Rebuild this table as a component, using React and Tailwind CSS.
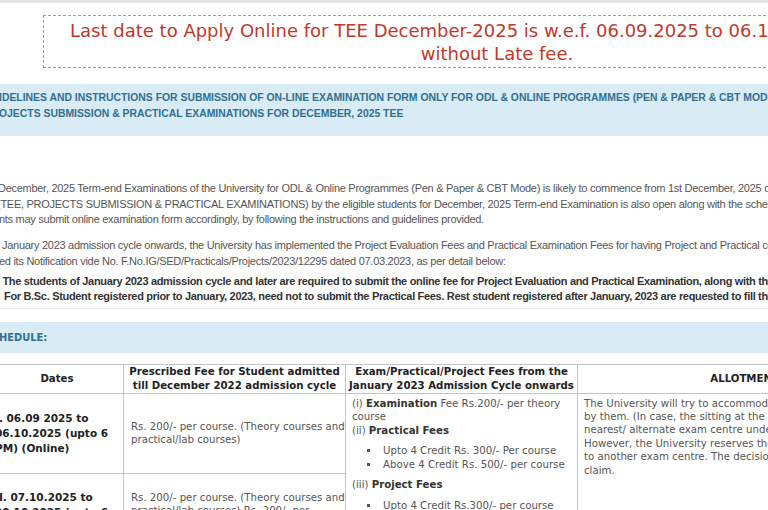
import React from "react";

const tbl = { fontFamily: '"DejaVu Sans", Verdana, sans-serif' };

export default function App() {
  return (
    <div className="w-[768px] h-[510px] overflow-hidden bg-white relative">
      <div className="h-[3px] bg-[#e4e4e4]" />
      {/* notice box */}
      <div
        className="ml-[43px] mt-[12px] w-[908px] h-[53px] border border-dashed border-[#9a9a9a] text-center text-[#c0392b] text-[18px] leading-[23px] pt-[3px] whitespace-nowrap"
        style={{ fontFamily: '"DejaVu Sans", Verdana, sans-serif' }}
      >
        <div>Last date to Apply Online for TEE December-2025 is w.e.f. 06.09.2025 to 06.10.2025 (6:00 PM)</div>
        <div>without Late fee.</div>
      </div>

      {/* heading band */}
      <div
        className="mt-[16px] h-[52px] bg-[#d9ebf5] text-[#31708f] font-bold text-[10.4px] leading-[16px] pt-[6px] whitespace-nowrap"
        style={{ fontFamily: '"Liberation Sans", Arial, sans-serif' }}
      >
        <div className="-ml-[1px]">IDELINES AND INSTRUCTIONS FOR SUBMISSION OF ON-LINE EXAMINATION FORM ONLY FOR ODL &amp; ONLINE PROGRAMMES (PEN &amp; PAPER &amp; CBT MODE)</div>
        <div className="-ml-[1px]">OJECTS SUBMISSION &amp; PRACTICAL EXAMINATIONS FOR DECEMBER, 2025 TEE</div>
      </div>

      {/* paragraphs */}
      <div
        className="mt-[45px] text-[#555] text-[11px] leading-[15.5px] tracking-[-0.28px] whitespace-nowrap"
        style={{ fontFamily: '"Liberation Sans", Arial, sans-serif' }}
      >
        <div>
          <div className="-ml-[2px]">December, 2025 Term-end Examinations of the University for ODL &amp; Online Programmes (Pen &amp; Paper &amp; CBT Mode) is likely to commence from 1st December, 2025 onwards.</div>
          <div className="-ml-[3px]">(TEE, PROJECTS SUBMISSION &amp; PRACTICAL EXAMINATIONS) by the eligible students for December, 2025 Term-end Examination is also open along with the schedule.</div>
          <div className="-ml-[1px]">nts may submit online examination form accordingly, by following the instructions and guidelines provided.</div>
        </div>
        <div className="mt-[10.5px]">
          <div className="ml-[2px]">January 2023 admission cycle onwards, the University has implemented the Project Evaluation Fees and Practical Examination Fees for having Project and Practical courses</div>
          <div className="-ml-[1px]">ed its Notification vide No. F.No.IG/SED/Practicals/Projects/2023/12295 dated 07.03.2023, as per detail below:</div>
        </div>
        <div className="mt-[4.5px] font-bold text-[#333] tracking-[-0.32px]">
          <div className="-ml-[3px]">. The students of January 2023 admission cycle and later are required to submit the online fee for Project Evaluation and Practical Examination, along with the</div>
          <div className="ml-[4px]">For B.Sc. Student registered prior to January, 2023, need not to submit the Practical Fees. Rest student registered after January, 2023 are requested to fill the</div>
        </div>
      </div>

      <div className="mt-[3px] h-[1px] bg-[#e6eef2]" />

      {/* schedule band */}
      <div
        className="mt-[13px] h-[31px] bg-[#d9ebf5] text-[#31708f] font-bold text-[11px] leading-[31px] -ml-[1px]"
        style={{ fontFamily: '"DejaVu Sans Condensed", "DejaVu Sans", sans-serif' }}
      >
        HEDULE:
      </div>

      {/* table */}
      <table
        className="mt-[11px] -ml-[10px] w-[1011px] border-collapse text-[10.2px] table-fixed"
        style={tbl}
      >
        <colgroup>
          <col className="w-[133px]" />
          <col className="w-[222px]" />
          <col className="w-[232px]" />
          <col className="w-[424px]" />
        </colgroup>
        <thead>
          <tr className="h-[29px] text-[#222] font-bold leading-[14px]">
            <th className="border border-[#c4c4c4] text-center align-middle">Dates</th>
            <th className="border border-[#c4c4c4] text-center align-middle whitespace-nowrap">Prescribed Fee for Student admitted<br />till December 2022 admission cycle</th>
            <th className="border border-[#c4c4c4] text-center align-middle whitespace-nowrap">Exam/Practical/Project Fees from the<br />January 2023 Admission Cycle onwards</th>
            <th className="border border-[#c4c4c4] text-center align-middle pl-[14px]">ALLOTMENT OF EXAM CENTRE</th>
          </tr>
        </thead>
        <tbody>
          <tr className="h-[80px]">
            <td className="border border-[#c4c4c4] align-middle pl-[4px] font-bold text-[10.5px] text-[#222] leading-[15px] whitespace-nowrap">
              I. 06.09 2025 to<br />06.10.2025 (upto 6<br />PM) (Online)
            </td>
            <td className="border border-[#c4c4c4] align-middle pl-[7px] pr-0 text-[#555] leading-[13.5px]">
              Rs. 200/- per course. (Theory courses and practical/lab courses)
            </td>
            <td rowSpan={2} className="border border-[#c4c4c4] align-top pl-[6px] pt-[3px] text-[#555] leading-[13.5px]">
              <div>(i) <b className="text-[#333]">Examination</b> Fee Rs.200/- per theory course</div>
              <div>(ii) <b className="text-[#333]">Practical Fees</b></div>
              <ul className="mt-[7px] ml-[28px] list-[square]">
                <li className="pl-[3px]">Upto 4 Credit Rs. 300/- Per course</li>
                <li className="pl-[3px]">Above 4 Credit Rs. 500/- per course</li>
              </ul>
              <div className="mt-[7px]">(iii) <b className="text-[#333]">Project Fees</b></div>
              <ul className="mt-[7px] ml-[28px] list-[square]">
                <li className="pl-[3px]">Upto 4 Credit Rs.300/- per course</li>
                <li className="pl-[3px]">Above 4 Credit Rs.500/- per course</li>
              </ul>
            </td>
            <td rowSpan={2} className="border border-[#c4c4c4] align-top pl-[6px] pt-[3px] text-[#555] leading-[13.4px] whitespace-nowrap">
              <div>The University will try to accommodate the students in the exam centre opted</div>
              <div>by them. (In case, the sitting at the opted exam centre is not feasible, the</div>
              <div>nearest/ alternate exam centre under the same RC will be allotted.)</div>
              <div>However, the University reserves the right to allot any student</div>
              <div>to another exam centre. The decision of the University shall be final and no</div>
              <div>claim.</div>
            </td>
          </tr>
          <tr className="h-[60px]">
            <td className="border border-[#c4c4c4] align-top pt-[16px] pl-[4px] font-bold text-[10.5px] text-[#222] leading-[15px] whitespace-nowrap">
              II. 07.10.2025 to<br />20.10.2025 (upto 6<br />PM) (Online)
            </td>
            <td className="border border-[#c4c4c4] align-top pt-[17px] pl-[7px] pr-0 text-[#555] leading-[13.5px]">
              Rs. 200/- per course. (Theory courses and practical/lab courses) Rs. 200/- per course late fee
            </td>
          </tr>
        </tbody>
      </table>
    </div>
  );
}
